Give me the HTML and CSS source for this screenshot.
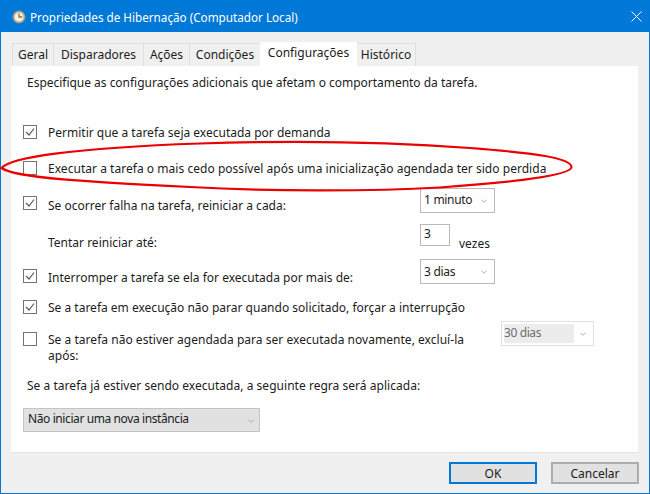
FILE: index.html
```html
<!DOCTYPE html>
<html lang="pt-BR">
<head>
<meta charset="utf-8">
<title>Propriedades de Hibernação</title>
<link rel="stylesheet" href="styles.css">
</head>
<body>
<div class="window">
  <header class="titlebar">
    <svg class="clock" width="14" height="14" viewBox="0 0 14 14"><circle cx="7" cy="7" r="6" fill="#cdbb98" stroke="#9a9a9a"/><circle cx="7" cy="7" r="4.300" fill="#f7f1e2"/><path d="M7 3.500V7H10.300" fill="none" stroke="#8a7448" stroke-width="1.300"/></svg>
    <span class="title">Propriedades de Hibernação (Computador Local)</span>
    <svg class="close" width="11" height="11" viewBox="0 0 11 11"><path d="M.5.5l10 10M10.500.5l-10 10" stroke="#fff" stroke-width="1"/></svg>
  </header>
  <nav class="tabs">
    <span class="tab t-geral">Geral</span>
    <span class="tab t-disp">Disparadores</span>
    <span class="tab t-acoes">Ações</span>
    <span class="tab t-cond">Condições</span>
    <span class="tab active">Configurações</span>
    <span class="tab t-hist">Histórico</span>
  </nav>
  <main class="panel">
    <p class="intro">Especifique as configurações adicionais que afetam o comportamento da tarefa.</p>
    <div class="row r1"><span class="box on"><svg viewBox="0 0 12 12"><path d="M2 6l3 3 5-6.500" /></svg></span><span class="label">Permitir que a tarefa seja executada por demanda</span></div>
    <div class="row r2"><span class="box"></span><span class="label">Executar a tarefa o mais cedo possível após uma inicialização agendada ter sido perdida</span></div>
    <div class="row r3"><span class="box on"><svg viewBox="0 0 12 12"><path d="M2 6l3 3 5-6.500" /></svg></span><span class="label wide">Se ocorrer falha na tarefa, reiniciar a cada:</span><span class="select">1 minuto<svg class="chev" viewBox="0 0 7 4"><path d="M.5.500L3.500 3.500 6.500.5"/></svg></span></div>
    <div class="row r4"><span class="box blank"></span><span class="label wide">Tentar reiniciar até:</span><span class="spin">3</span><span class="times">vezes</span></div>
    <div class="row r5"><span class="box on"><svg viewBox="0 0 12 12"><path d="M2 6l3 3 5-6.500" /></svg></span><span class="label wide">Interromper a tarefa se ela for executada por mais de:</span><span class="select">3 dias<svg class="chev" viewBox="0 0 7 4"><path d="M.5.500L3.500 3.500 6.500.5"/></svg></span></div>
    <div class="row r6"><span class="box on"><svg viewBox="0 0 12 12"><path d="M2 6l3 3 5-6.500" /></svg></span><span class="label">Se a tarefa em execução não parar quando solicitado, forçar a interrupção</span></div>
    <div class="row r7"><span class="box"></span><span class="label two">Se a tarefa não estiver agendada para ser executada novamente, excluí-la após:</span><span class="select disabled"><span class="sel-text">30 dias</span><svg class="chev" viewBox="0 0 7 4"><path d="M.5.500L3.500 3.500 6.500.5"/></svg></span></div>
    <p class="rule">Se a tarefa já estiver sendo executada, a seguinte regra será aplicada:</p>
    <span class="select policy">Não iniciar uma nova instância<svg class="chev" viewBox="0 0 7 4"><path d="M.5.500L3.500 3.500 6.500.5"/></svg></span>
  </main>
  <footer class="buttons">
    <span class="btn default">OK</span>
    <span class="btn">Cancelar</span>
  </footer>
  <svg class="mark" width="650" height="494" viewBox="0 0 650 494"><path d="M1.500 168C10 158 70 148 200 143.500 290 140.500 390 142 470 148 535 153 571 158 571.500 167 571 175 520 182 440 187.500 370 191.500 270 191.500 190 187 90 182 15 178 1.500 168Z"/></svg>
</div>
</body>
</html>
```
FILE: styles.css
```css
* { box-sizing: border-box; }
html, body { margin: 0; padding: 0; }
body { width: 650px; height: 494px; overflow: hidden; font: 12px/16px "Noto Sans", sans-serif; color: #1c1c1c; }
.window { position: relative; width: 650px; height: 494px; background: #f0f0f0; border: 1px solid #0078d7; display: flex; flex-direction: column; }
.titlebar { height: 31px; flex: none; background: #0078d7; color: #fff; display: flex; align-items: center; padding-left: 11px; font-size: 11.700px; }
.clock { flex: none; }
.title { margin-left: 4px; }
.close { margin-left: auto; margin-right: 7px; }
.tabs { flex: none; height: 34px; display: flex; align-items: flex-end; padding-left: 11px; }
.tab { height: 23px; line-height: 22px; text-align: center; background: #f0f0f0; border: 1px solid #dedede; border-bottom: 0; margin-left: -1px; }
.t-geral { width: 42px; margin-left: 0; }
.t-disp { width: 91px; }
.t-acoes { width: 47px; }
.t-cond { width: 72px; }
.t-hist { width: 60px; }
.tab.active { width: 97px; height: 25px; background: #fff; border: 0; line-height: 21px; margin-bottom: -1px; position: relative; z-index: 1; }
.panel { flex: none; width: 627px; height: 387px; margin-left: 10px; background: #fff; border-bottom: 1px solid #e3e3e3; padding: 9px 0 0 12px; display: flex; flex-direction: column; align-items: flex-start; }
.intro { margin: 0 0 0 4px; height: 16px; letter-spacing: -.02px; }
.row { display: flex; align-items: flex-start; width: 100%; }
.box { flex: none; width: 14px; height: 14px; border: 1px solid #737373; background: #fff; margin-right: 11px; display: block; }
.box svg { display: block; width: 12px; height: 12px; fill: none; stroke: #5a5a5a; stroke-width: 1.200; }
.box.blank { border: 0; background: none; }
.label { white-space: nowrap; }
.wide { width: 372px; }
.two { width: 440px; white-space: normal; letter-spacing: .03px; }
.r1 { margin-top: 34px; height: 16px; }
.r2 { margin-top: 20px; height: 16px; }
.r2 .label { letter-spacing: .035px; }
.r3 { margin-top: 11px; height: 26px; }
.r3 .box { margin-top: 8px; }
.r3 .label { margin-top: 10px; }
.r3 .select { padding-bottom: 2px; }
.r4 { margin-top: 10px; height: 22px; }
.r4 .label { margin-top: 11px; }
.r5 { margin-top: 13px; height: 25px; }
.r5 .box { margin-top: 10px; }
.r5 .label { margin-top: 11px; }
.r6 { margin-top: 16px; height: 16px; }
.r7 { margin-top: 16px; height: 37px; position: relative; }
.r7 .box { margin-top: 0; }
.select { position: relative; display: flex; align-items: center; width: 75px; height: 25px; padding-left: 3px; border: 1px solid #b9b9b9; background: #fff; flex: none; white-space: nowrap; letter-spacing: -.3px; }
.chev { position: absolute; right: 7px; top: 10px; width: 6px; height: 4px; fill: none; stroke: #a0a0a0; stroke-width: 1; }
.spin { flex: none; width: 30px; height: 22px; border: 1px solid #b9b9b9; padding: 0 0 0 3px; line-height: 18px; }
.times { margin: 12px 0 0 9px; }
.disabled { width: 93px; margin: -11px 0 0 13px; border-color: #e0e0e0; color: #6d6d6d; padding: 2px; align-items: stretch; letter-spacing: -.4px; }
.sel-text { width: 70px; background: #ececec; line-height: 18px; }
.rule { margin: 9px 0 0 4px; height: 16px; letter-spacing: .03px; }
.policy { width: 237px; height: 24px; margin-top: 14px; background: #e1e1e1; border-color: #c4c4c4; padding-left: 4px; padding-bottom: 2px; letter-spacing: -.4px; }
.policy .chev { right: 5px; }
.buttons { flex: 1; display: flex; justify-content: flex-end; gap: 14px; padding: 9px 10px 0 0; }
.btn { width: 88px; height: 22px; line-height: 19px; text-align: center; background: #e1e1e1; border: 2px solid #adadad; }
.btn.default { border-color: #0078d7; }
.mark { position: absolute; left: -1px; top: -1px; pointer-events: none; }
.mark path { fill: none; stroke: #ea0000; stroke-width: 2.200; }
```
